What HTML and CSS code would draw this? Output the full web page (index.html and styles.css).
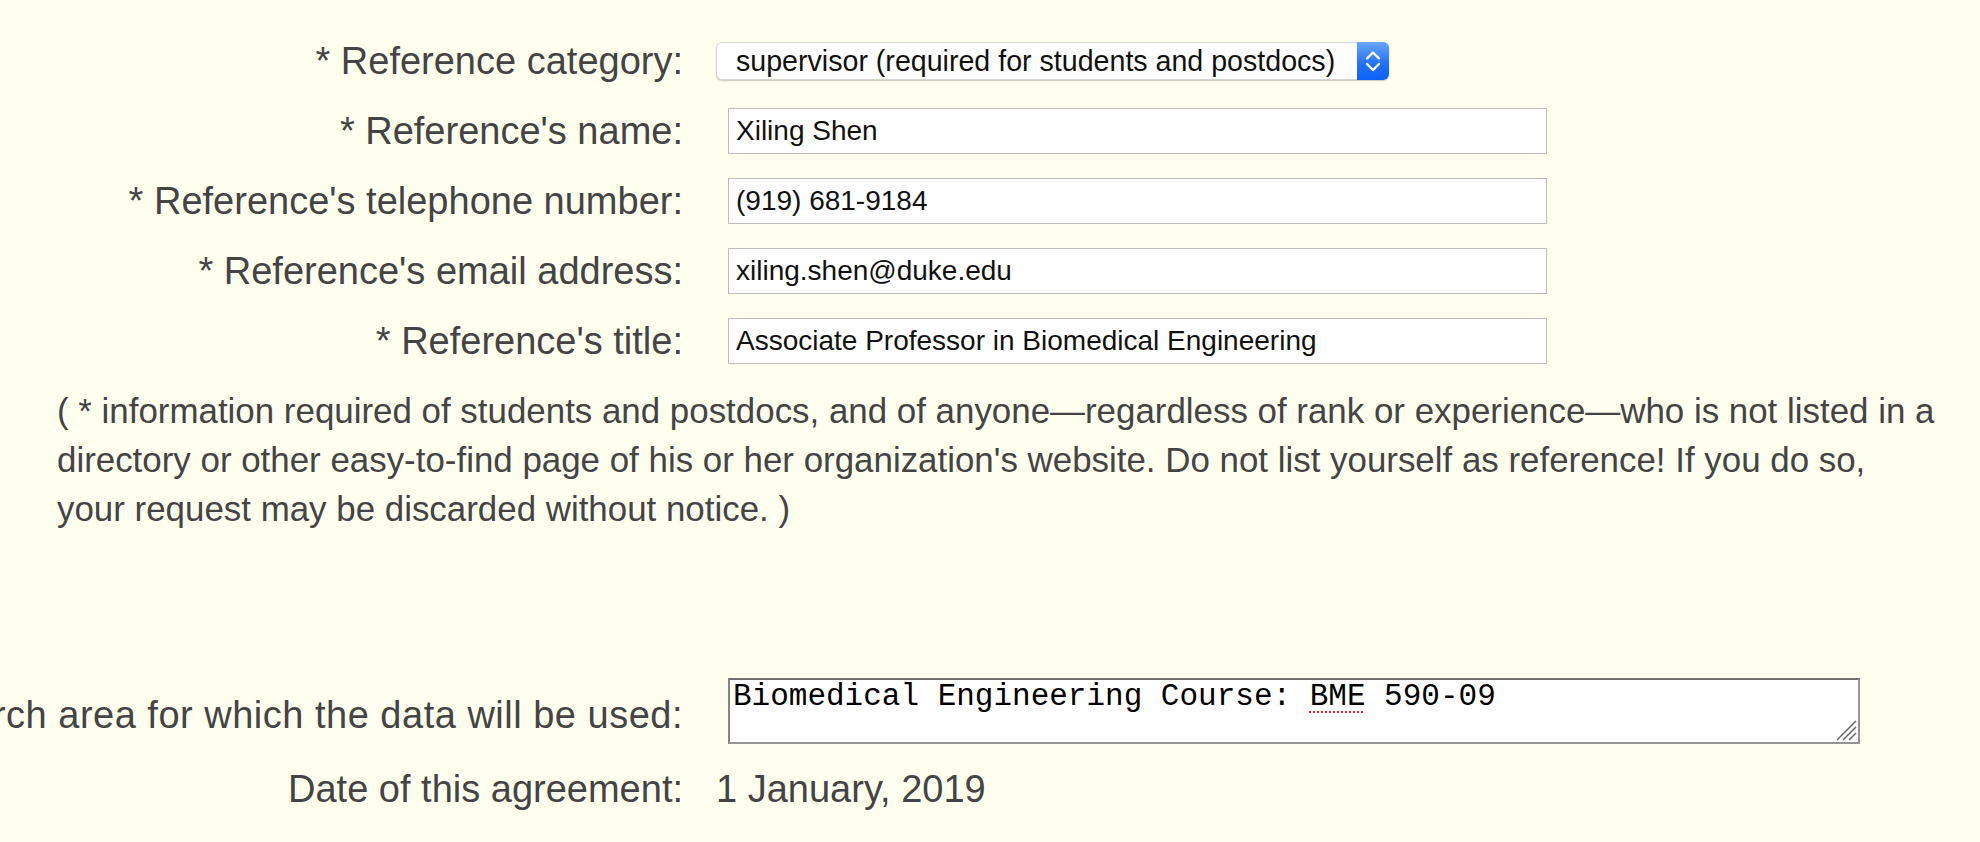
FILE: index.html
```html
<!DOCTYPE html>
<html lang="en">
<head>
<meta charset="utf-8">
<title>Reference form</title>
<link rel="stylesheet" href="styles.css">
</head>
<body>
<main class="page">
  <div class="form-grid upper">
    <div class="label">* Reference category:</div>
    <div class="control">
      <div class="select-wrap">
        <select class="select">
          <option>supervisor (required for students and postdocs)</option>
        </select>
        <span class="select-arrow">
          <svg width="32" height="38" viewBox="0 0 32 38"><path d="M10 16.5 L16 10.5 L22 16.5" fill="none" stroke="#fff" stroke-width="2.4" stroke-linecap="round" stroke-linejoin="round"/><path d="M10 22 L16 28 L22 22" fill="none" stroke="#fff" stroke-width="2.4" stroke-linecap="round" stroke-linejoin="round"/></svg>
        </span>
      </div>
    </div>

    <div class="label">* Reference's name:</div>
    <div class="control"><input class="text-input" type="text" value="Xiling Shen"></div>

    <div class="label">* Reference's telephone number:</div>
    <div class="control"><input class="text-input" type="text" value="(919) 681-9184"></div>

    <div class="label">* Reference's email address:</div>
    <div class="control"><input class="text-input" type="text" value="xiling.shen@duke.edu"></div>

    <div class="label">* Reference's title:</div>
    <div class="control"><input class="text-input" type="text" value="Associate Professor in Biomedical Engineering"></div>
  </div>

  <p class="note">( * information required of students and postdocs, and of anyone—regardless of rank or experience—who is not listed in a<br>directory or other easy-to-find page of his or her organization's website. Do not list yourself as reference! If you do so,<br>your request may be discarded without notice. )</p>

  <div class="form-grid lower">
    <div class="label label-wide">Research area for which the data will be used:</div>
    <div class="control">
      <div class="textarea">Biomedical Engineering Course: <span class="spell">BME</span> 590-09<svg class="grip" width="24" height="24" viewBox="0 0 24 24"><path d="M23 4 L4 23 M23 10 L10 23 M23 16 L16 23" stroke="#666" stroke-width="1.5"/></svg></div>
    </div>

    <div class="label">Date of this agreement:</div>
    <div class="control"><span class="value">1 January, 2019</span></div>
  </div>
</main>
</body>
</html>
```

FILE: styles.css
```css
html, body {
  margin: 0;
  padding: 0;
}

body {
  background: #fffff0;
  color: #444;
  font-family: "Liberation Sans", Arial, Helvetica, sans-serif;
  overflow: hidden;
}

.page {
  padding-top: 26px;
}

.form-grid {
  display: grid;
  grid-template-columns: 683px 1fr;
  column-gap: 33px;
}

.upper {
  grid-auto-rows: 70px;
}

.label,
.control {
  display: flex;
  align-items: center;
  box-sizing: border-box;
}

.lower .label,
.lower .control {
  height: 70px;
}

.label {
  justify-content: flex-end;
  font-size: 38px;
  white-space: nowrap;
  padding-top: 1px;
}

.label-wide {
  letter-spacing: 0.5px;
  padding-top: 8px;
}

/* select */
.select-wrap {
  position: relative;
  width: 673px;
  height: 38px;
}

.select {
  appearance: none;
  -webkit-appearance: none;
  width: 100%;
  height: 100%;
  box-sizing: border-box;
  margin: 0;
  padding: 0 40px 0 19px;
  border: 1px solid #d6d6d0;
  border-radius: 6px;
  background: #fff;
  box-shadow: 0 1px 1.5px rgba(0, 0, 0, 0.22);
  font-family: "Liberation Sans", Arial, sans-serif;
  font-size: 28.6px;
  color: #111;
  outline: none;
}

.select-arrow {
  position: absolute;
  top: 0;
  right: 0;
  width: 32px;
  height: 38px;
  border-radius: 0 6px 6px 0;
  background: linear-gradient(#6aa8fc, #1f6ff7 60%, #0c62f6);
  display: flex;
}

/* text inputs */
.text-input {
  margin: 0 0 0 12px;
  width: 819px;
  height: 46px;
  box-sizing: border-box;
  border: 1px solid #bdbdbd;
  padding: 0 7px;
  background: #fff;
  font-family: "Liberation Sans", Arial, sans-serif;
  font-size: 28px;
  color: #111;
  outline: none;
}

/* note paragraph */
.note {
  margin: 10px 0 0;
  padding: 0 0 0 57px;
  font-size: 34.9px;
  line-height: 49px;
  white-space: nowrap;
}

/* lower section */
.lower {
  margin-top: 143px;
  row-gap: 8px;
}

.textarea {
  position: relative;
  margin-left: 12px;
  width: 1132px;
  height: 66px;
  box-sizing: border-box;
  padding: 0 3px;
  background: #fff;
  border: 2px solid #959595;
  border-top-color: #707070;
  border-left-color: #858585;
  font-family: "Liberation Mono", "Courier New", monospace;
  font-size: 31px;
  line-height: 34px;
  color: #000;
  white-space: pre;
}

.spell {
  text-decoration: underline dotted #e0241f;
  text-decoration-thickness: 2px;
  text-underline-offset: 6px;
}

.grip {
  position: absolute;
  right: 1px;
  bottom: 1px;
}

.value {
  font-size: 38px;
  padding-top: 1px;
}
```
